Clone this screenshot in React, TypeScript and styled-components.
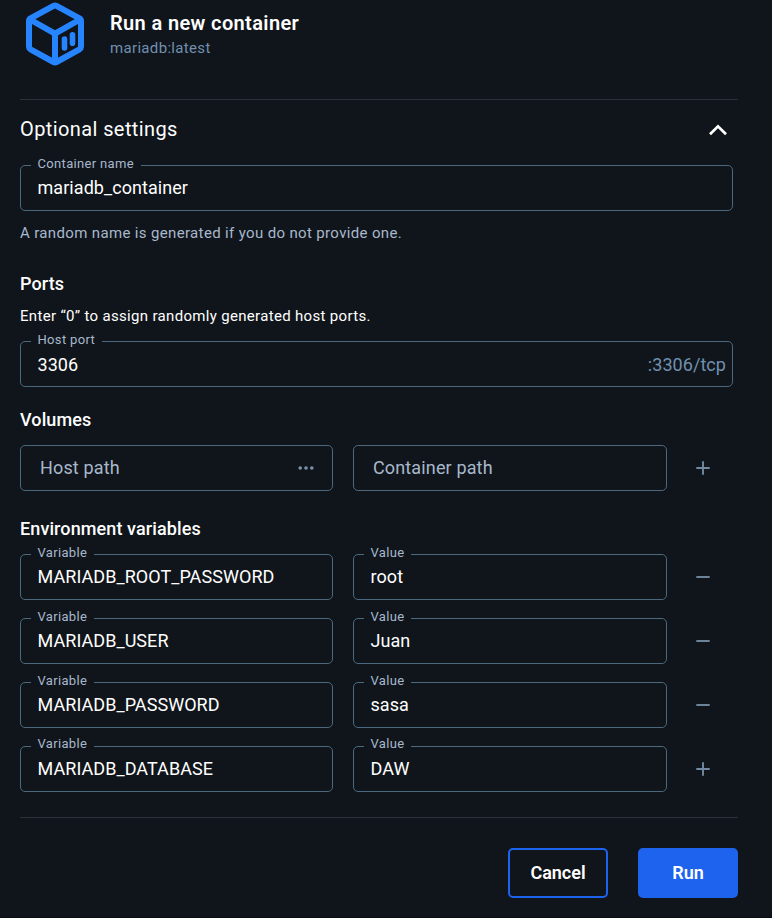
import React from "react";
import styled, { createGlobalStyle } from "styled-components";

const GlobalStyle = createGlobalStyle`
  * { box-sizing: border-box; }
  body {
    margin: 0;
    background: #10151b;
    color: #fff;
    font-family: Roboto, "Liberation Sans", sans-serif;
  }
`;

const Dialog = styled.main`
  width: 772px;
  height: 918px;
  padding: 0 34px 0 20px;
  display: flex;
  flex-direction: column;
  background: #10151b;
  border-bottom: 1px solid #0c0c12;
  overflow: hidden;
`;

const Header = styled.header`
  display: flex;
  height: 99px;
  flex-shrink: 0;
`;

const Logo = styled.svg`
  width: 70px;
  height: 70px;
  flex-shrink: 0;
`;

const Heading = styled.div`
  padding: 10px 0 0 20px;
`;

const Title = styled.h1`
  margin: 0;
  font-size: 20px;
  line-height: 26px;
  font-weight: 600;
  letter-spacing: 0.37px;
`;

const Subtitle = styled.p`
  margin: 0;
  font-size: 15px;
  line-height: 24px;
  letter-spacing: 0.33px;
  color: #7190b0;
`;

const Divider = styled.hr`
  width: 718px;
  height: 1px;
  margin: 0;
  border: 0;
  flex-shrink: 0;
  background: #2b3138;
`;

const Accordion = styled.div`
  display: flex;
  align-items: center;
  justify-content: space-between;
  height: 57px;
  margin-bottom: 8px;
  padding-right: 8px;
  font-size: 20px;
  letter-spacing: 0.4px;
`;

const Chevron = styled.svg`
  width: 24px;
  height: 24px;
`;

const SectionTitle = styled.h2<{ $height: number; $top?: number }>`
  margin: ${(p) => p.$top ?? 0}px 0 0;
  height: ${(p) => p.$height}px;
  line-height: ${(p) => p.$height}px;
  font-size: 18px;
  font-weight: 500;
  letter-spacing: 0.1px;
`;

const Note = styled.p<{ $muted?: boolean; $height: number }>`
  margin: 0;
  height: ${(p) => p.$height}px;
  line-height: ${(p) => p.$height}px;
  font-size: 15px;
  letter-spacing: ${(p) => (p.$muted ? 0.35 : 0.32)}px;
  color: ${(p) => (p.$muted ? "#a8b8cc" : "#fff")};
`;

const Spacer = styled.div`
  height: 9px;
  flex-shrink: 0;
`;

const Field = styled.div<{ $placeholder?: boolean; $lowered?: boolean }>`
  position: relative;
  display: flex;
  align-items: center;
  justify-content: space-between;
  height: 46px;
  padding: ${(p) => (p.$lowered ? 2 : 0)}px 6px 0 ${(p) => (p.$placeholder ? 19 : 16.5)}px;
  border: 1px solid #4b687f;
  border-radius: 5px;
  font-size: 18px;
  line-height: 24px;
  letter-spacing: ${(p) => (p.$placeholder ? 0.14 : 0.06)}px;
  color: ${(p) => (p.$placeholder ? "#a8b8cc" : "#fff")};
`;

const Label = styled.span<{ $raised?: boolean }>`
  position: absolute;
  top: ${(p) => (p.$raised ? -11 : -10)}px;
  left: 10px;
  padding: 0 6.8px 0 6.5px;
  font-size: 13px;
  line-height: 16px;
  letter-spacing: 0.33px;
  color: #a8b8cc;
  background: #10151b;
`;

const Suffix = styled.span`
  color: #7190b0;
`;

const MainField = styled.div`
  width: 713px;
`;

const Row = styled.div`
  display: grid;
  grid-template-columns: 313px 314px 72px;
  column-gap: 20px;
  width: 719px;
`;

const Rows = styled.div`
  display: grid;
  row-gap: 18px;
  margin-bottom: 25px;
`;

const IconButton = styled.button`
  width: 72px;
  margin-left: -20px;
  padding: 0;
  border: 0;
  background: none;
  display: grid;
  place-items: center;
`;

const Browse = styled.svg`
  width: 18px;
  height: 6px;
  margin-right: 11px;
`;

const Footer = styled.footer`
  display: flex;
  justify-content: flex-end;
  gap: 30px;
  padding-top: 30px;
`;

const Button = styled.button<{ $primary?: boolean }>`
  width: 100px;
  height: 50px;
  padding: 0 0 2px;
  border: 2px solid #1d63ed;
  border-radius: 5px;
  background: ${(p) => (p.$primary ? "#1d63ed" : "transparent")};
  color: #fff;
  font: 600 18px Roboto, "Liberation Sans", sans-serif;
`;

function SignIcon({ plus }: { plus?: boolean }) {
  return (
    <svg width="14" height="14" viewBox="0 0 14 14">
      <path
        d={plus ? "M0.3 7H13.7M7 0.3V13.7" : "M0.3 7H13.7"}
        stroke="#718aa1"
        strokeWidth="1.9"
      />
    </svg>
  );
}

const variables = [
  { name: "MARIADB_ROOT_PASSWORD", value: "root" },
  { name: "MARIADB_USER", value: "Juan" },
  { name: "MARIADB_PASSWORD", value: "sasa" },
  { name: "MARIADB_DATABASE", value: "DAW" },
];

export default function App() {
  return (
    <>
      <GlobalStyle />
      <Dialog>
        <Header>
          <Logo viewBox="0 0 70 70" fill="none" stroke="#2684ff" strokeLinejoin="round" strokeLinecap="round">
            <path
              d="M33.5 5.8 Q35 5 36.5 5.8 L59.5 18.4 Q61 19.3 61 21 V46.8 Q61 48.4 59.5 49.3 L36.5 62 Q35 62.8 33.5 62 L10.5 49.3 Q9 48.4 9 46.8 V21 Q9 19.3 10.5 18.4 Z"
              strokeWidth="6"
            />
            <path d="M10 19.5 L35 33.7 L60 19.5 M35 34 V62" strokeWidth="6" />
            <path d="M44.5 39 V48 M52.5 34.8 V43.3" strokeWidth="5.6" />
          </Logo>
          <Heading>
            <Title>Run a new container</Title>
            <Subtitle>mariadb:latest</Subtitle>
          </Heading>
        </Header>
        <Divider />
        <Accordion>
          <span>Optional settings</span>
          <Chevron viewBox="0 0 24 24" fill="none" stroke="#fff" strokeWidth="2.7">
            <path d="M4 17.2 L12 9.4 L20 17.2" />
          </Chevron>
        </Accordion>
        <MainField>
          <Field>
            <Label>Container name</Label>
            mariadb_container
          </Field>
        </MainField>
        <Note $muted $height={44}>A random name is generated if you do not provide one.</Note>
        <SectionTitle $top={13} $height={32}>Ports</SectionTitle>
        <Note $height={32}>Enter “0” to assign randomly generated host ports.</Note>
        <Spacer />
        <MainField>
          <Field $lowered>
            <Label>Host port</Label>
            3306
            <Suffix>:3306/tcp</Suffix>
          </Field>
        </MainField>
        <SectionTitle $top={17} $height={32}>Volumes</SectionTitle>
        <Spacer />
        <Row>
          <Field $placeholder>
            Host path
            <Browse viewBox="0 0 18 6" fill="#7b93aa">
              <circle cx="3.2" cy="3" r="1.8" />
              <circle cx="9" cy="3" r="1.8" />
              <circle cx="14.8" cy="3" r="1.8" />
            </Browse>
          </Field>
          <Field $placeholder>Container path</Field>
          <IconButton aria-label="Add volume">
            <SignIcon plus />
          </IconButton>
        </Row>
        <SectionTitle $top={22} $height={32}>Environment variables</SectionTitle>
        <Spacer />
        <Rows>
          {variables.map((v, i) => {
            const last = i === variables.length - 1;
            return (
              <Row key={v.name}>
                <Field>
                  <Label $raised={last}>Variable</Label>
                  {v.name}
                </Field>
                <Field>
                  <Label $raised={last}>Value</Label>
                  {v.value}
                </Field>
                <IconButton aria-label={last ? "Add variable" : "Remove variable"}>
                  <SignIcon plus={last} />
                </IconButton>
              </Row>
            );
          })}
        </Rows>
        <Divider />
        <Footer>
          <Button>Cancel</Button>
          <Button $primary>Run</Button>
        </Footer>
      </Dialog>
    </>
  );
}
